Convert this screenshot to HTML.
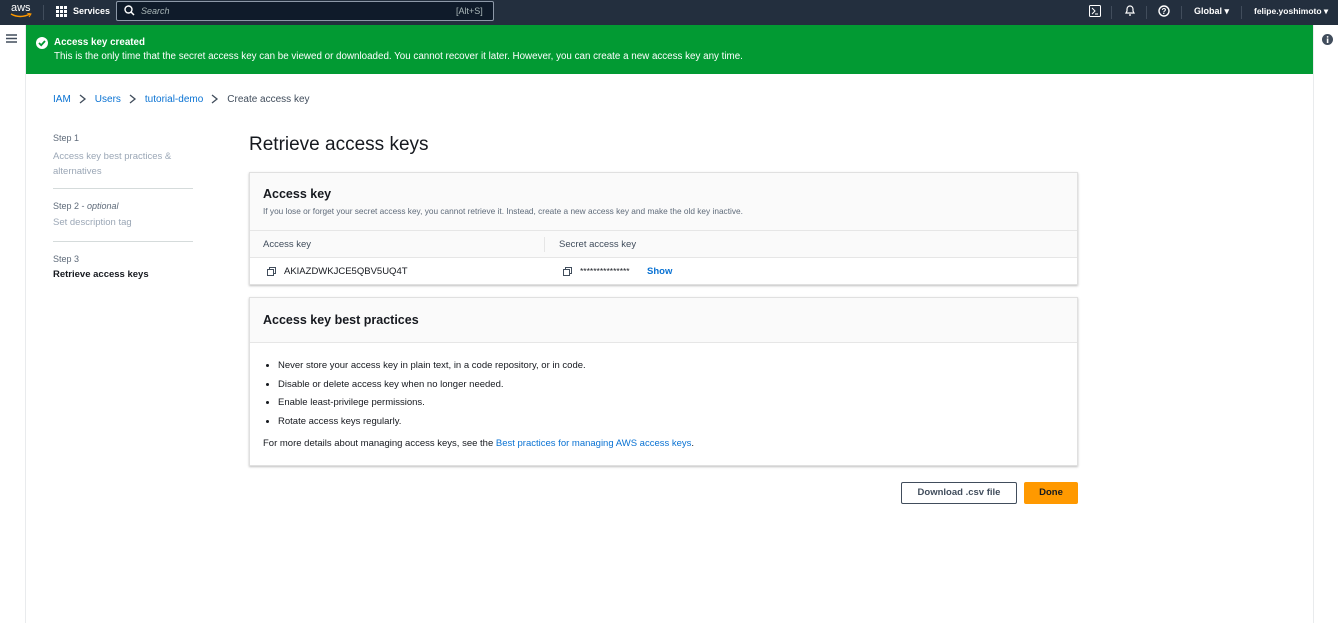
<!DOCTYPE html>
<html><head><style>
*{margin:0;padding:0;box-sizing:border-box}
body{width:1338px;height:623px;overflow:hidden;font-family:"Liberation Sans",sans-serif;background:#fff;position:relative;color:#16191f}
.abs{position:absolute}
.nav{left:0;top:0;width:1338px;height:25px;background:#232f3e;color:#fff;font-size:9px;font-weight:bold}
.banner{left:26px;top:25px;width:1287px;height:49px;background:#029a33;color:#fff;font-size:9.8px}
.link{color:#0972d3}
.card{background:#fff;border:1px solid #e0e0e0;box-shadow:0 1px 2px rgba(0,0,0,.25)}
.hdr{background:#fafafa;border-bottom:1px solid #e6e6e6}
.small{font-size:9px}
li{margin-bottom:7.5px}
</style></head><body>
<div class="abs nav">
 <div class="abs" style="left:11px;top:2px;font-size:11px;font-weight:normal">aws</div>
 <svg class="abs" style="left:10px;top:13px" width="22" height="6"><path d="M1 1 Q10 6 20 1" stroke="#f90" stroke-width="1.5" fill="none"/><path d="M17 0 L21 1 L19 4" stroke="#f90" stroke-width="1" fill="none"/></svg>
 <div class="abs" style="left:43px;top:5px;width:1px;height:15px;background:#414d5c"></div>
 <svg class="abs" style="left:56px;top:6px" width="11" height="11" fill="#fff"><rect x="0" y="0" width="3" height="3"/><rect x="4" y="0" width="3" height="3"/><rect x="8" y="0" width="3" height="3"/><rect x="0" y="4" width="3" height="3"/><rect x="4" y="4" width="3" height="3"/><rect x="8" y="4" width="3" height="3"/><rect x="0" y="8" width="3" height="3"/><rect x="4" y="8" width="3" height="3"/><rect x="8" y="8" width="3" height="3"/></svg>
 <div class="abs" style="left:73px;top:6px">Services</div>
 <div class="abs" style="left:116px;top:1px;width:378px;height:20px;border:1px solid #8d99a8;background:#0f1b2a;border-radius:2px"></div>
 <svg class="abs" style="left:124px;top:5px" width="11" height="11"><circle cx="4.5" cy="4.5" r="3.5" stroke="#fff" stroke-width="1.4" fill="none"/><path d="M7 7 L10 10" stroke="#fff" stroke-width="1.5"/></svg>
 <div class="abs" style="left:141px;top:6px;font-style:italic;font-weight:normal;color:#aab7b8">Search</div>
 <div class="abs" style="left:456px;top:6px;font-weight:normal;color:#aab7b8">[Alt+S]</div>
 <svg class="abs" style="left:1089px;top:5px" width="12" height="12"><rect x="0.5" y="0.5" width="11" height="11" rx="1" stroke="#fff" fill="none"/><path d="M3 3 L6 6 L3 9 M6 9 H9" stroke="#fff" fill="none"/></svg>
 <svg class="abs" style="left:1124px;top:4px" width="12" height="13"><path d="M2 9 H10 L9 7 V5 A3 3 0 0 0 3 5 V7 Z M5 11 H7" stroke="#fff" stroke-width="1.2" fill="none"/></svg>
 <svg class="abs" style="left:1158px;top:5px" width="12" height="12"><circle cx="6" cy="6" r="5" stroke="#fff" stroke-width="1.4" fill="none"/><text x="3.5" y="9" font-size="8" fill="#fff" font-family="Liberation Sans" font-weight="bold">?</text></svg>
 <div class="abs" style="left:1111px;top:6px;width:1px;height:13px;background:#414d5c"></div>
 <div class="abs" style="left:1146px;top:6px;width:1px;height:13px;background:#414d5c"></div>
 <div class="abs" style="left:1181px;top:6px;width:1px;height:13px;background:#414d5c"></div>
 <div class="abs" style="left:1241px;top:6px;width:1px;height:13px;background:#414d5c"></div>
 <div class="abs" style="left:1194px;top:6px">Global ▾</div>
 <div class="abs" style="left:1254px;top:6px;font-size:8.5px">felipe.yoshimoto ▾</div>
</div>
<div class="abs" style="left:25px;top:25px;width:1px;height:598px;background:#e9ebed"></div>
<div class="abs" style="left:1313px;top:25px;width:1px;height:598px;background:#e9ebed"></div>
<svg class="abs" style="left:6px;top:34px" width="11" height="9"><path d="M0 1 H11 M0 4.5 H11 M0 8 H11" stroke="#414d5c" stroke-width="1.5"/></svg>
<svg class="abs" style="left:1322px;top:34px" width="11" height="11"><circle cx="5.5" cy="5.5" r="5.5" fill="#414d5c"/><rect x="4.8" y="4.5" width="1.6" height="4.5" fill="#fff"/><circle cx="5.6" cy="2.9" r="0.9" fill="#fff"/></svg>
<div class="abs banner">
 <svg class="abs" style="left:10px;top:12px" width="12" height="12"><circle cx="6" cy="6" r="6" fill="#fff"/><path d="M3 6 L5.2 8.2 L9 4" stroke="#029a33" stroke-width="1.8" fill="none"/></svg>
 <div class="abs" style="left:28px;top:12px;font-weight:bold">Access key created</div>
 <div class="abs" style="left:28px;top:26px">This is the only time that the secret access key can be viewed or downloaded. You cannot recover it later. However, you can create a new access key any time.</div>
</div>
<div class="abs" style="left:53px;top:93px;font-size:10px;display:flex;align-items:center"><span class="link">IAM</span>
<svg width="24" height="12"><path d="M9 2 L14 6 L9 10" stroke="#414d5c" stroke-width="1.3" fill="none"/></svg><span class="link">Users</span>
<svg width="24" height="12"><path d="M9 2 L14 6 L9 10" stroke="#414d5c" stroke-width="1.3" fill="none"/></svg><span class="link">tutorial-demo</span>
<svg width="24" height="12"><path d="M9 2 L14 6 L9 10" stroke="#414d5c" stroke-width="1.3" fill="none"/></svg><span style="color:#414d5c">Create access key</span></div>
<div class="abs small" style="left:53px;top:133px;color:#5f6b7a">Step 1</div>
<div class="abs small" style="left:53px;top:149px;color:#9ba7b6;line-height:15px;font-size:9.5px">Access key best practices &amp;<br>alternatives</div>
<div class="abs" style="left:53px;top:188px;width:140px;height:1px;background:#d5dbdb"></div>
<div class="abs small" style="left:53px;top:201px;color:#5f6b7a">Step 2 - <i>optional</i></div>
<div class="abs" style="left:53px;top:217px;color:#9ba7b6;font-size:9.5px">Set description tag</div>
<div class="abs" style="left:53px;top:241px;width:140px;height:1px;background:#d5dbdb"></div>
<div class="abs small" style="left:53px;top:254px;color:#5f6b7a">Step 3</div>
<div class="abs" style="left:53px;top:269px;font-size:9.5px;font-weight:bold">Retrieve access keys</div>
<div class="abs" style="left:249px;top:134px;font-size:19px">Retrieve access keys</div>
<div class="abs card" style="left:249px;top:172px;width:829px;height:113px">
 <div class="hdr" style="height:58px;position:relative">
  <div class="abs" style="left:13px;top:14px;font-size:12.5px;font-weight:bold">Access key</div>
  <div class="abs" style="left:13px;top:33px;font-size:8.3px;color:#5f6b7a">If you lose or forget your secret access key, you cannot retrieve it. Instead, create a new access key and make the old key inactive.</div>
 </div>
 <div class="hdr" style="height:27px;position:relative;font-size:9.5px;color:#414d5c">
  <div class="abs" style="left:13px;top:8px">Access key</div>
  <div class="abs" style="left:294px;top:6px;width:1px;height:15px;background:#e6e6e6"></div>
  <div class="abs" style="left:309px;top:8px">Secret access key</div>
 </div>
 <div style="position:relative;height:27px;font-size:9.5px">
  <svg class="abs" style="left:17px;top:9px" width="9" height="9"><rect x="0.5" y="2.5" width="6" height="6" fill="none" stroke="#414d5c"/><path d="M2.5 2.5 V0.5 H8.5 V6.5 H6.5" fill="none" stroke="#414d5c"/></svg>
  <div class="abs" style="left:34px;top:8px">AKIAZDWKJCE5QBV5UQ4T</div>
  <svg class="abs" style="left:313px;top:9px" width="9" height="9"><rect x="0.5" y="2.5" width="6" height="6" fill="none" stroke="#414d5c"/><path d="M2.5 2.5 V0.5 H8.5 V6.5 H6.5" fill="none" stroke="#414d5c"/></svg>
  <div class="abs" style="left:330px;top:8px;font-size:8.5px">***************</div>
  <div class="abs link" style="left:397px;top:8px;font-weight:bold">Show</div>
 </div>
</div>
<div class="abs card" style="left:249px;top:297px;width:829px;height:169px">
 <div class="hdr" style="height:45px;position:relative"><div class="abs" style="left:13px;top:15px;font-size:12.5px;font-weight:bold">Access key best practices</div></div>
 <ul style="position:absolute;left:28px;top:62px;font-size:9.5px;list-style:disc">
  <li>Never store your access key in plain text, in a code repository, or in code.</li>
  <li>Disable or delete access key when no longer needed.</li>
  <li>Enable least-privilege permissions.</li>
  <li>Rotate access keys regularly.</li>
 </ul>
 <div class="abs" style="left:13px;top:140px;font-size:9.5px">For more details about managing access keys, see the <span class="link">Best practices for managing AWS access keys</span>.</div>
</div>
<div class="abs" style="left:901px;top:482px;width:116px;height:22px;border:1px solid #414d5c;border-radius:2px;font-size:9.5px;font-weight:bold;color:#414d5c;text-align:center;line-height:20px">Download .csv file</div>
<div class="abs" style="left:1024px;top:482px;width:54px;height:22px;background:#ff9900;border-radius:2px;font-size:9.5px;font-weight:bold;color:#16191f;text-align:center;line-height:22px">Done</div>
</body></html>
